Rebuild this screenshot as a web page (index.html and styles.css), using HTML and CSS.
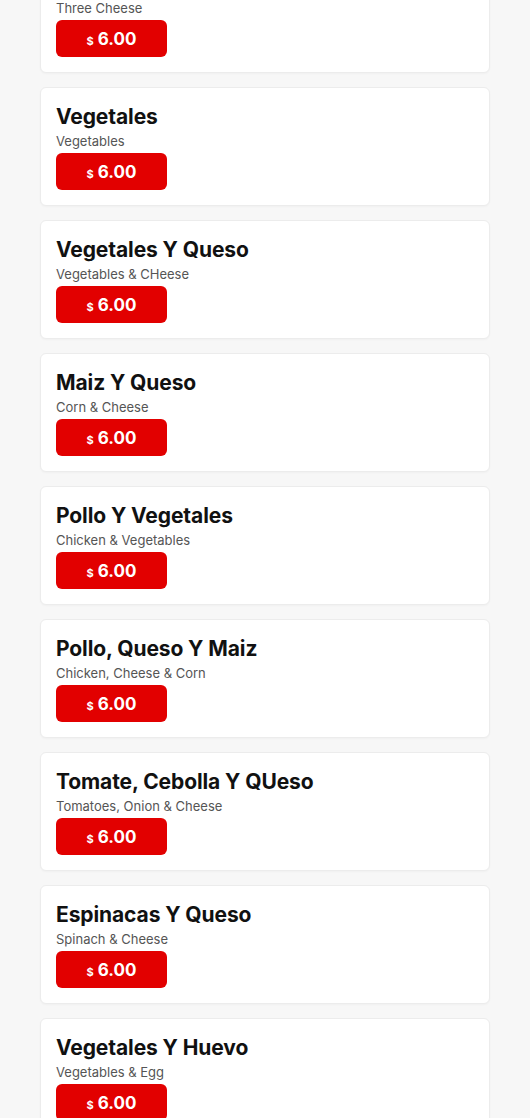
FILE: index.html
```html
<!DOCTYPE html>
<html>
<head>
<meta charset="utf-8">
<link rel="stylesheet" href="styles.css">
</head>
<body>
<div class="list">
  <div class="card"><div class="title">Tres Quesos</div><div class="sub">Three Cheese</div><div class="price"><span class="cur">$</span>6.00</div></div>
  <div class="card"><div class="title">Vegetales</div><div class="sub">Vegetables</div><div class="price"><span class="cur">$</span>6.00</div></div>
  <div class="card"><div class="title">Vegetales Y Queso</div><div class="sub">Vegetables &amp; CHeese</div><div class="price"><span class="cur">$</span>6.00</div></div>
  <div class="card"><div class="title">Maiz Y Queso</div><div class="sub">Corn &amp; Cheese</div><div class="price"><span class="cur">$</span>6.00</div></div>
  <div class="card"><div class="title">Pollo Y Vegetales</div><div class="sub">Chicken &amp; Vegetables</div><div class="price"><span class="cur">$</span>6.00</div></div>
  <div class="card"><div class="title">Pollo, Queso Y Maiz</div><div class="sub">Chicken, Cheese &amp; Corn</div><div class="price"><span class="cur">$</span>6.00</div></div>
  <div class="card"><div class="title">Tomate, Cebolla Y QUeso</div><div class="sub">Tomatoes, Onion &amp; Cheese</div><div class="price"><span class="cur">$</span>6.00</div></div>
  <div class="card"><div class="title">Espinacas Y Queso</div><div class="sub">Spinach &amp; Cheese</div><div class="price"><span class="cur">$</span>6.00</div></div>
  <div class="card"><div class="title">Vegetales Y Huevo</div><div class="sub">Vegetables &amp; Egg</div><div class="price"><span class="cur">$</span>6.00</div></div>
</div>
</body>
</html>
```
FILE: styles.css
```css
html, body {
  margin: 0;
  padding: 0;
  background: #f7f7f7;
  font-family: Inter, "Liberation Sans", sans-serif;
  overflow: hidden;
}
.list {
  display: flex;
  flex-direction: column;
  gap: 14px;
  margin: -46px 40px 0 40px;
}
.card {
  background: #fff;
  border: 1px solid #ececec;
  border-radius: 6px;
  padding: 15px;
  height: 119px;
  box-sizing: border-box;
  display: flex;
  flex-direction: column;
  align-items: flex-start;
  box-shadow: 0 1px 2px rgba(0,0,0,0.03);
}
.title {
  font-size: 21px;
  font-weight: 700;
  line-height: 28px;
  color: #111;
  letter-spacing: -0.1px;
}
.sub {
  font-size: 13px;
  line-height: 20px;
  color: #555;
  margin-bottom: 2px;
}
.price {
  width: 111px;
  height: 37px;
  background: #e20000;
  border-radius: 6px;
  color: #fff;
  font-size: 17px;
  font-weight: 700;
  display: flex;
  align-items: center;
  justify-content: center;
  gap: 4px;
}
.cur {
  font-size: 11px;
  margin-top: 4px;
}
```
